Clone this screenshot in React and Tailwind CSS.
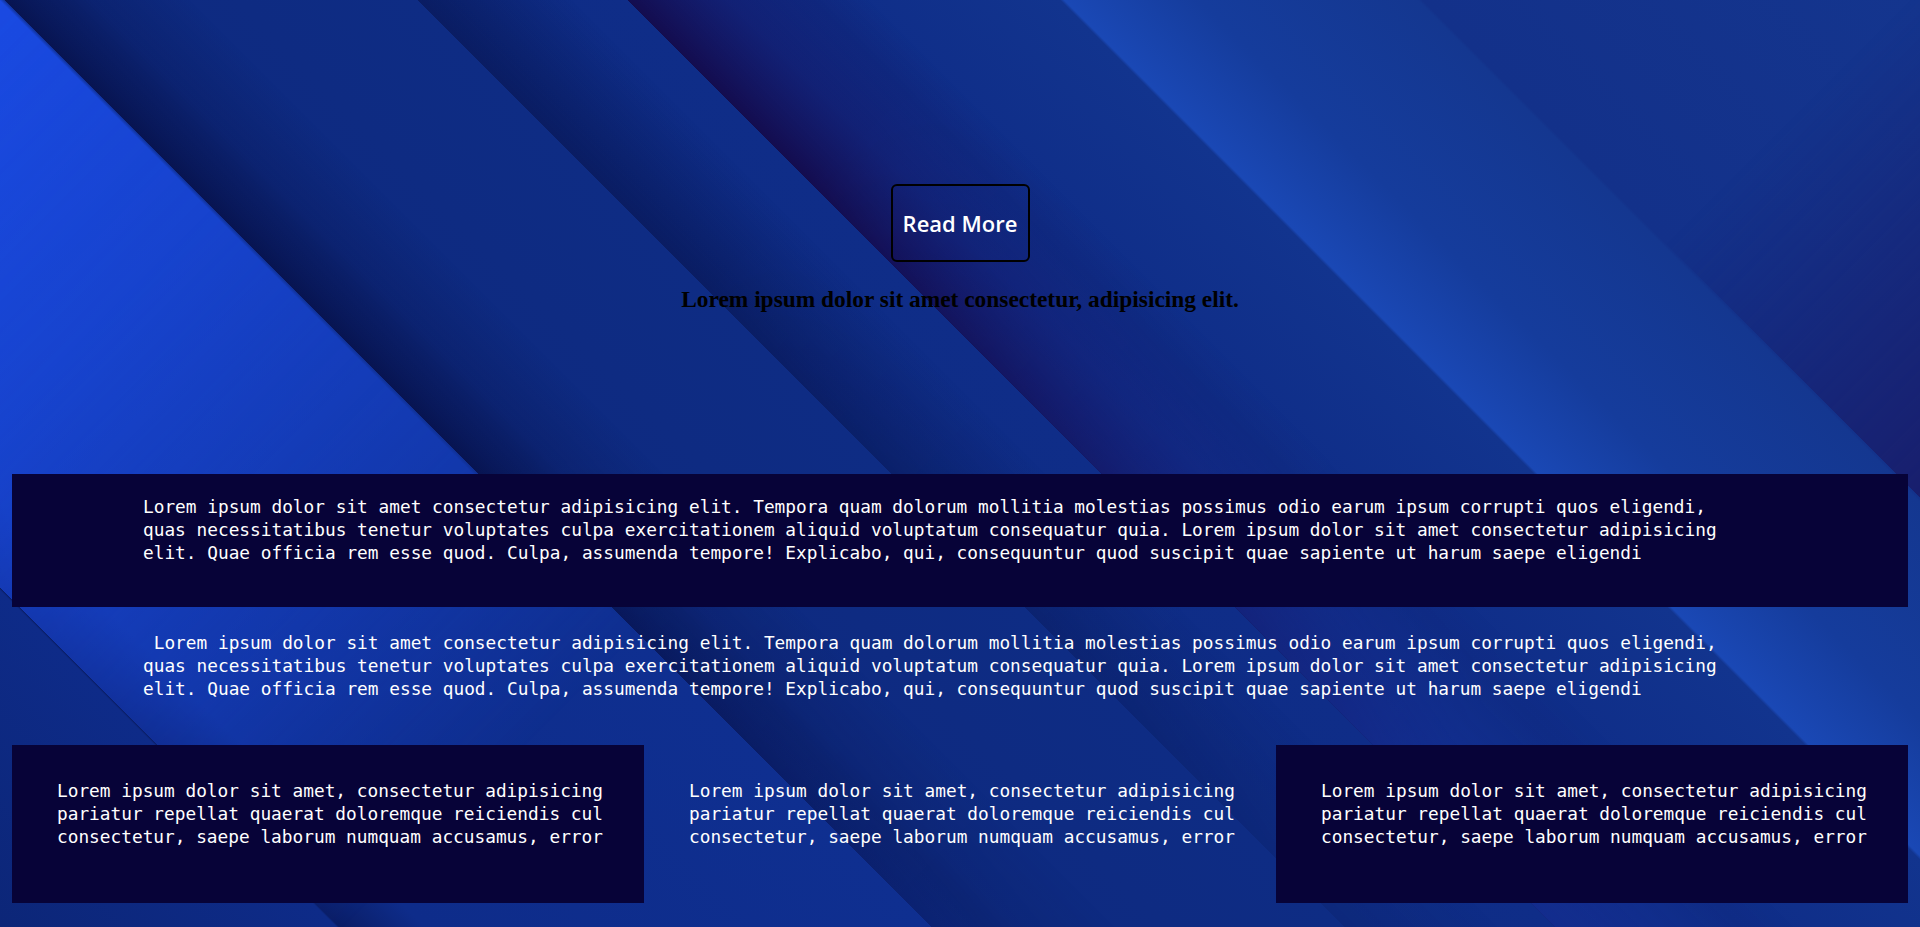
import React from 'react';

const longText =
  'Lorem ipsum dolor sit amet consectetur adipisicing elit. Tempora quam dolorum mollitia molestias possimus odio earum ipsum corrupti quos eligendi, quas necessitatibus tenetur voluptates culpa exercitationem aliquid voluptatum consequatur quia. Lorem ipsum dolor sit amet consectetur adipisicing elit. Quae officia rem esse quod. Culpa, assumenda tempore! Explicabo, qui, consequuntur quod suscipit quae sapiente ut harum saepe eligendi';

const cardText =
  'Lorem ipsum dolor sit amet, consectetur adipisicing pariatur repellat quaerat doloremque reiciendis cul consectetur, saepe laborum numquam accusamus, error';

const Card = ({ dark }) => (
  <div className={`h-[158px] pt-[34px] pl-[45px] pr-[30px] ${dark ? 'bg-[#070338]' : ''}`}>
    <p>{cardText}</p>
  </div>
);

const App = () => {
  return (
    <div className="grid min-h-screen bg-[linear-gradient(45deg,#0c2678_0px,#0e2b88_238px,#0a1d66_240px,#0e2c8a_300px,#0f2f90_659px,#0e2a80_700px,#0e2c84_951px,#0f2d88_1099px,#1337a2_1100px,#0f2d88_1230px,#12348e_1405px,#1a48b5_1408px,#153c9c_1504px,#143790_1658px,#13318a_1661px,#14358e_2013px)]">
      {/* bright band, fading down the stripe */}
      <div className="col-start-1 row-start-1 bg-[linear-gradient(45deg,transparent_240px,#1b4ce6_240px,#1a4ae2_655px,transparent_659px)] [mask-image:linear-gradient(135deg,#000_0px,rgba(0,0,0,0.75)_300px,rgba(0,0,0,0.35)_650px,transparent_900px)]" />
      {/* stripe shadows, strong near the top */}
      <div className="col-start-1 row-start-1 bg-[linear-gradient(45deg,transparent_659px,rgba(6,14,66,0.8)_659px,rgba(6,14,66,0.25)_720px,transparent_790px,transparent_951px,rgba(6,14,66,0.5)_951px,transparent_1060px,transparent_1099px,rgba(20,8,70,0.9)_1099px,rgba(20,8,70,0.4)_1170px,transparent_1270px)] [mask-image:linear-gradient(135deg,#000_0px,#000_700px,rgba(0,0,0,0.25)_1550px)]" />
      {/* dark stripe lower right */}
      <div className="col-start-1 row-start-1 bg-[linear-gradient(45deg,transparent_1661px,#1a1a66_1661px)] [mask-image:linear-gradient(135deg,transparent_1350px,#000_1800px)]" />

      <main className="relative z-10 col-start-1 row-start-1 flex flex-col pt-[184px] pb-6 font-['DejaVu_Sans_Mono',monospace] text-[17.8px] leading-[23px] text-white">
        <div className="flex flex-col items-center">
          <button
            type="button"
            className="flex h-[78px] w-[139px] items-center justify-center rounded-md border-2 border-black font-['Open_Sans',sans-serif] text-[22px] font-semibold text-white"
          >
            Read More
          </button>
          <h3 className="mt-[23px] font-['Liberation_Serif',serif] text-[23.4px] font-bold leading-[28px] text-black">
            Lorem ipsum dolor sit amet consectetur, adipisicing elit.
          </h3>
        </div>

        <div className="mx-3 mt-[161px] bg-[#070338] pt-[21px] pb-[43px] pl-[131px]">
          <p className="w-[1600px]">{longText}</p>
        </div>

        <p className="mt-6 ml-[143px] w-[1600px]">{'\u00a0' + longText}</p>

        <div className="mx-3 mt-[45px] grid grid-cols-3">
          <Card dark />
          <Card />
          <Card dark />
        </div>
      </main>
    </div>
  );
};

export default App;
